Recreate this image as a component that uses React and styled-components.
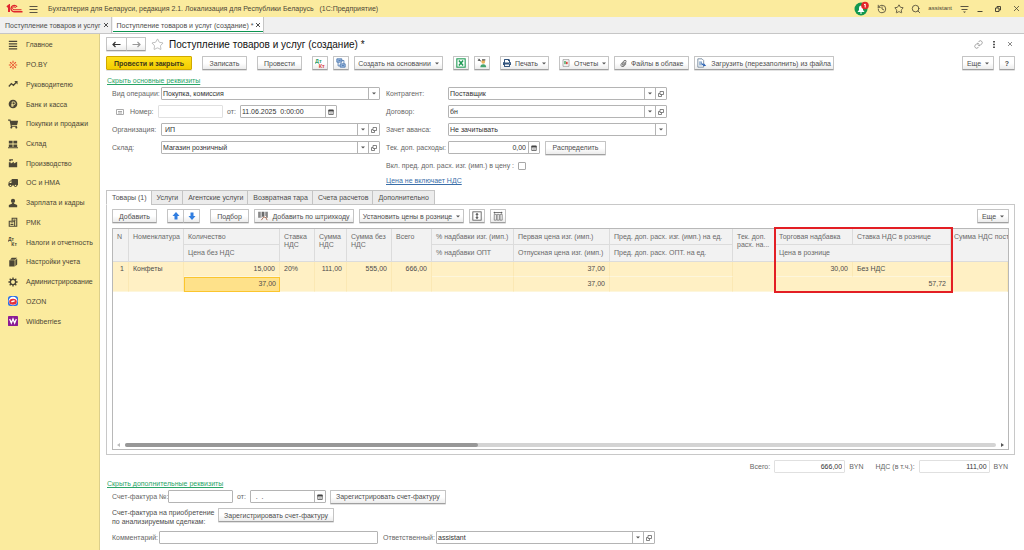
import React, { useState } from 'react';
import styled, { createGlobalStyle, css } from 'styled-components';
import { FaShoppingCart, FaTruck, FaPaperclip, FaPrint } from 'react-icons/fa';
import { History, Link, Search, Star } from 'lucide-react';

const GlobalStyle = createGlobalStyle`
  * {
    box-sizing: border-box;
  }
  body {
    margin: 0;
    background: #fff;
    color: #4d4d4d;
    font-family: 'Liberation Sans', Arial, sans-serif;
    font-size: 7px;
    line-height: 9px;
  }
  button, input, select {
    font: inherit;
    color: inherit;
    margin: 0;
  }
  svg {
    display: block;
    flex: none;
  }
`;

const Window = styled.div`
  min-height: 100vh;
  display: flex;
  flex-direction: column;
`;

/* Title bar */

const TitleBar = styled.header`
  height: 17px;
  padding: 0 3px 0 6px;
  background: #fbeb9e;
  display: flex;
  align-items: center;
  color: #4b4636;
`;

const AppName = styled.span`
  margin-left: 4px;
  flex: 1;
  white-space: pre;
`;

const TitleTools = styled.div`
  display: flex;
  align-items: center;
  gap: 7px;
`;

const WindowTools = styled.div`
  display: flex;
  align-items: center;
  gap: 8px;
  margin-left: 6px;
`;

const PlainButton = styled.button`
  border: 0;
  padding: 0;
  background: none;
  display: flex;
  align-items: center;
  justify-content: center;
  min-width: ${p => p.$width || 10}px;
  cursor: pointer;
`;

const UserName = styled.span`
  font-size: 6px;
`;

const WindowTabs = styled.nav`
  height: 17px;
  background: #f0f0f0;
  border-bottom: 1px solid #c6c6c6;
  display: flex;
`;

const WindowTab = styled.div`
  display: flex;
  align-items: center;
  gap: 2px;
  padding: 0 2px 0 5px;
  border-right: 1px solid #c6c6c6;
  white-space: nowrap;
  ${p =>
    p.$active &&
    css`
      background: #fff;
      margin-left: 1px;
      padding-left: 4px;
      box-shadow: inset 0 -1px #fff, inset 0 -2px #0c9450;
    `}
`;

/* Sections panel */

const Workspace = styled.div`
  flex: 1;
  display: flex;
`;

const Sidebar = styled.nav`
  width: 100px;
  flex: none;
  padding-top: 1px;
  background: #fbeb9e;
  border-right: 1px solid #dccf8b;
`;

const SectionList = styled.ul`
  height: 296px;
  margin: 0;
  padding: 0;
  list-style: none;
  display: grid;
  grid-auto-rows: 1fr;
`;

const Section = styled.a`
  height: 100%;
  padding-left: 8px;
  display: flex;
  align-items: center;
  gap: 8px;
  color: #4b4636;
  text-decoration: none;
  white-space: nowrap;
`;

/* Document form */

const Page = styled.main`
  flex: 1;
  min-width: 0;
  padding: 1px 9px 6px 6px;
  display: flex;
  flex-direction: column;
`;

const PageHead = styled.div`
  height: 18px;
  display: flex;
  align-items: center;
  gap: 5px;
  color: #8a8a8a;
`;

const Heading = styled.h1`
  flex: 1;
  margin: 0;
  font-size: 10px;
  font-weight: normal;
  color: #111;
`;

const PageTools = styled.div`
  display: flex;
  align-items: center;
  gap: 6px;
`;

const Bar = styled.div`
  display: flex;
  align-items: center;
  gap: 10px;
  margin-top: ${p => p.$top || 0}px;
`;

const Group = styled.div`
  display: flex;
  gap: ${p => (p.$joined ? 0 : 5)}px;
  margin-left: ${p => (p.$end ? 'auto' : 0)};
  button + button {
    margin-left: ${p => (p.$joined ? -1 : 0)}px;
  }
`;

const Button = styled.button`
  height: 14px;
  min-width: ${p => p.$width || 16}px;
  padding: 0 ${p => (p.$icon ? 0 : 2)}px;
  border: 1px solid #c4c4c4;
  border-bottom-color: #a0a0a0;
  border-radius: 1px;
  background: linear-gradient(#fff 50%, #ececec);
  box-shadow: 0 1px #e2e2e2;
  display: flex;
  align-items: center;
  justify-content: center;
  gap: 4px;
  white-space: nowrap;
  cursor: pointer;
  ${p =>
    p.$primary &&
    css`
      border-color: #d0a900;
      background: linear-gradient(#ffe11c, #f3cd00);
      color: #40391a;
      font-weight: bold;
    `}
`;

const Fold = styled.a`
  align-self: flex-start;
  margin-top: 6px;
  padding-left: 1px;
  color: #2aa568;
`;

const BlueLink = styled.a`
  height: 8px;
  line-height: 8px;
  color: #3a6ea8;
`;

const Requisites = styled.div`
  margin: 2px 0 5px;
  padding-left: 6px;
  display: grid;
  grid-template-columns: minmax(0, 268px) minmax(0, 281px);
  gap: 6px;
`;

const Column = styled.div`
  display: flex;
  flex-direction: column;
  align-items: flex-start;
  gap: 5px;
`;

const Row = styled.div`
  width: 100%;
  height: 13px;
  display: flex;
  align-items: center;
  gap: ${p => p.$gap || 0}px;
`;

const Label = styled.label`
  flex: none;
  width: ${p => (p.$width ? p.$width + 'px' : 'auto')};
  color: #666;
  white-space: nowrap;
`;

const Box = styled.div`
  height: 13px;
  width: ${p => (p.$width ? p.$width + 'px' : 'auto')};
  flex: ${p => (p.$width ? 'none' : 1)};
  min-width: 0;
  display: flex;
  border: 1px solid ${p => (p.$pale ? '#e0e0e0' : '#b4b4b4')};
  border-radius: 1px;
  background: #fff;
`;

const Input = styled.input`
  flex: 1;
  width: 100%;
  min-width: 0;
  height: 11px;
  padding: 0 ${p => (p.$right ? 2 : 1)}px;
  border: 0;
  outline: 0;
  background: none;
  color: #333;
  text-align: ${p => (p.$right ? 'right' : 'left')};
`;

const Picker = styled.div`
  flex: 1;
  min-width: 0;
  display: grid;
`;

const Select = styled.select`
  grid-area: 1 / 1;
  appearance: none;
  width: 100%;
  height: 11px;
  padding: 0 12px 0 1px;
  border: 0;
  outline: 0;
  background: none;
  color: #333;
  white-space: pre;
`;

const PickerMark = styled.span`
  grid-area: 1 / 1;
  justify-self: end;
  width: 11px;
  border-left: 1px solid #b4b4b4;
  display: flex;
  align-items: center;
  justify-content: center;
  pointer-events: none;
`;

const BoxButton = styled.button`
  width: 11px;
  height: 11px;
  padding: 0;
  border: 0;
  border-left: 1px solid #b4b4b4;
  background: none;
  display: flex;
  align-items: center;
  justify-content: center;
`;

const Check = styled.input`
  appearance: none;
  width: 8px;
  height: 8px;
  border: 1px solid #a8a8a8;
  border-radius: 1px;
  background: #fff;
`;

/* Tabular part */

const Tabs = styled.div`
  height: 15px;
  margin-bottom: -1px;
  display: flex;
`;

const Tab = styled.button`
  position: relative;
  padding: 0 5px;
  border: 1px solid #c4c4c4;
  border-bottom-color: ${p => (p.$active ? '#fff' : '#c4c4c4')};
  background: ${p => (p.$active ? '#fff' : '#ececec')};
  white-space: nowrap;
  & + & {
    margin-left: -2px;
  }
`;

const Panel = styled.section`
  flex: 1;
  padding: 4px 5px;
  border: 1px solid #c8c8c8;
  display: flex;
  flex-direction: column;
`;

const TableFrame = styled.div`
  position: relative;
  flex: 1;
  margin-top: 5px;
  border: 1px solid #b8b8b8;
  display: flex;
  flex-direction: column;
  justify-content: space-between;
`;

const TableScroll = styled.div`
  overflow: hidden;
`;

const Table = styled.table`
  width: 100%;
  table-layout: fixed;
  border-collapse: separate;
  border-spacing: 0;
  line-height: 8px;
`;

const HeadCell = styled.th`
  height: ${p => (p.$low ? 17 : 16)}px;
  padding: 4px 0 0 4px;
  border-right: 1px solid #dcdcdc;
  border-bottom: 1px solid #dcdcdc;
  background: #f2f2f2;
  color: #6a6a6a;
  font-weight: normal;
  text-align: left;
  vertical-align: top;
  white-space: ${p => (p.$wrap ? 'pre-line' : 'nowrap')};
  &[rowspan]:last-child {
    padding-left: 3px;
    border-right: 0;
  }
`;

const Cell = styled.td`
  height: 15px;
  padding: 3px 4px 0;
  border-right: 1px solid #fbe8b4;
  border-bottom: 1px solid #fdf6dc;
  background: #fff0c4;
  vertical-align: top;
  text-align: ${p => (p.$right ? 'right' : 'left')};
  ${p =>
    p.$current &&
    css`
      padding-top: 2px;
      padding-right: 3px;
      border: 1px solid #fbc52d;
      background: #fee18a;
    `}
`;

const Frame = styled.div`
  position: absolute;
  top: -2px;
  left: 661px;
  width: 179px;
  height: 66px;
  border: 2px solid #e31e24;
  pointer-events: none;
`;

const ScrollRow = styled.div`
  height: 8px;
  padding: 0 3px;
  display: flex;
  align-items: center;
  gap: 4px;
`;

const Track = styled.div`
  flex: 1;
  height: 4px;
  border-radius: 2px;
  background: #d4d4d4;
`;

const Thumb = styled.div`
  height: 4px;
  border-radius: 2px;
  background: #979797;
`;

/* Footer of the document */

const Totals = styled.div`
  height: 13px;
  margin-top: 5px;
  padding-right: 7px;
  display: flex;
  align-items: center;
  justify-content: flex-end;
  gap: 4px;
  color: #666;
  span + label {
    margin-left: 8px;
  }
`;

const Extra = styled.div`
  margin-top: 2px;
  padding-left: 6px;
  display: flex;
  flex-direction: column;
  gap: 5px;
`;

const ExtraRow = styled.div`
  display: flex;
  align-items: flex-start;
  gap: 5px;
`;

const TwoLines = styled.span`
  width: 101px;
  white-space: pre;
`;

/* Icons */

const Icon = ({ size = 10, children, box = 12 }) => (
  <svg width={size} height={size} viewBox={`0 0 ${box} ${box}`} fill="currentColor" aria-hidden="true">
    {children}
  </svg>
);

const Logo = () => (
  <svg width="17" height="9" viewBox="0 0 34 18" fill="none" stroke="#e0262d" strokeWidth="2.8" aria-label="1C">
    <path d="M2 6 L6 3 V16" strokeWidth="4" />
    <path d="M22 6 A6.4 6.4 0 1 0 16 15.500 H33" />
    <path d="M19 8 A3 3 0 1 0 16 11.500 H31" strokeWidth="2" />
  </svg>
);

const Caret = () => (
  <svg width="4" height="3" viewBox="0 0 4 3" fill="#555" aria-hidden="true">
    <path d="M0 0.500 H4 L2 2.500 Z" />
  </svg>
);

const Cross = ({ size = 6 }) => (
  <svg width={size} height={size} viewBox="0 0 6 6" stroke="currentColor" fill="none" aria-hidden="true">
    <path d="M1 1 L5 5 M5 1 L1 5" />
  </svg>
);

const Arrow = ({ back }) => (
  <svg width="9" height="7" viewBox="0 0 9 7" fill="none" stroke={back ? '#333' : '#999'} strokeWidth="1.2" aria-hidden="true">
    <path d={back ? 'M8.500 3.500 H1 M3.500 1 L1 3.500 L3.500 6' : 'M0.500 3.500 H8 M5.500 1 L8 3.500 L5.500 6'} />
  </svg>
);

const OpenIcon = () => (
  <svg width="6" height="6" viewBox="0 0 12 12" fill="none" stroke="#666" strokeWidth="1.6" aria-hidden="true">
    <path d="M4 1 H11 V7 H4 Z M4 5 H1 V11 H7 V7" />
  </svg>
);

const CalendarIcon = () => (
  <svg width="6" height="6" viewBox="0 0 12 12" aria-hidden="true">
    <path d="M1.500 2 H10.500 V11 H1.500 Z" fill="#fff" stroke="#555" strokeWidth="1.600" />
    <path d="M1 1.500 H11 V5 H1 Z" fill="#444" />
    <path d="M3.500 7 H9 M3.500 9 H9" stroke="#888" />
  </svg>
);

const UpDown = ({ down }) => (
  <svg width="8" height="8" viewBox="0 0 8 8" fill="#2f7de0" aria-hidden="true">
    <path d={down ? 'M4 8 L0.500 4 H2.500 V0.500 H5.500 V4 H7.500 Z' : 'M4 0 L0.500 4 H2.500 V7.500 H5.500 V4 H7.500 Z'} />
  </svg>
);

const DtKt = ({ mono }) => (
  <Icon size={mono ? 10 : 11}>
    <g fontSize="6" fontWeight="bold" fontFamily="Liberation Sans">
      <text x="0" y="5" fill={mono ? '#4b4636' : '#2f9d62'}>Дт</text>
      <text x="4" y="11" fill={mono ? '#4b4636' : '#d9433c'}>Кт</text>
    </g>
  </Icon>
);

const sections = [
  ['Главное', <Icon><path d="M1 1 H11 V2.500 H1 Z M1 4 H11 V5.500 H1 Z M1 7 H11 V8.500 H1 Z M1 10 H11 V11.500 H1 Z" /></Icon>],
  ['PO.BY', (
    <Icon>
      <path d="M6 1 V4 M6 8 V11 M1 6 H3.500 M8.500 6 H11 M2.500 2.500 L4.500 4.500 M9.500 2.500 L7.500 4.500 M2.500 9.500 L4.500 7.500 M9.500 9.500 L7.500 7.500" stroke="#e8502e" strokeWidth="1.300" />
      <circle cx="6" cy="6" r="1.300" fill="#e8502e" />
    </Icon>
  )],
  ['Руководителю', <Icon><path d="M1 9 L4 5.500 L6.500 7.500 L10 4" fill="none" stroke="currentColor" strokeWidth="1.600" /><path d="M7.500 2.500 H11.500 V6.500 Z" /></Icon>],
  ['Банк и касса', (
    <Icon>
      <circle cx="6" cy="6" r="5.200" />
      <path d="M5 9.500 V3.500 H7 A1.600 1.600 0 0 1 7 6.800 H4 M4 8.200 H7" fill="none" stroke="#fbeb9e" />
    </Icon>
  )],
  ['Покупки и продажи', <FaShoppingCart size={10} />],
  ['Склад', <Icon><path d="M1 2 H5.500 V5.500 H1 Z M6.500 2 H11 V5.500 H6.500 Z M1 6.500 H5.500 V9.500 H1 Z M6.500 6.500 H11 V9.500 H6.500 Z M0 10 H12 V11 H0 Z" /></Icon>],
  ['Производство', <Icon><path d="M1 11 V5 H3 L3.500 6.500 L7 4.500 V6.500 L11 4.500 V11 Z M1.500 1.500 H6 V3 H3.500 V4 H1.500 Z" /></Icon>],
  ['ОС и НМА', <FaTruck size={10} transform="scale(-1 1)" />],
  ['Зарплата и кадры', <Icon><circle cx="6" cy="3.500" r="2.500" /><path d="M1 11 V8.500 L4.500 7 L5 6 H7 L7.500 7 L11 8.500 V11 Z" /></Icon>],
  ['РМК', (
    <Icon>
      <path d="M1.500 5 H8 V11 H1.500 Z M5 5 V1.500 H10.500 V11 H8" fill="none" stroke="currentColor" strokeWidth="1.300" />
      <path d="M3 6.500 H6.500 V7.500 H3 Z M3 8.500 H6.500 V9.500 H3 Z M6.500 3 H9 V4.500 H6.500 Z" />
    </Icon>
  )],
  ['Налоги и отчетность', <DtKt mono />],
  ['Настройки учета', <Icon><path d="M1.500 4 H8 V11.500 H1.500 Z M2.500 3.200 L4.500 1 H11 L8.500 3.200 Z M8.800 4 L11 2 V9 L8.800 11 Z" /></Icon>],
  ['Администрирование', (
    <Icon>
      <circle cx="6" cy="6" r="3.200" fill="none" stroke="currentColor" strokeWidth="1.600" />
      <path d="M6 0.500 V3 M6 9 V11.500 M0.500 6 H3 M9 6 H11.500 M2 2 L4 4 M10 2 L8 4 M2 10 L4 8 M10 10 L8 8" stroke="currentColor" strokeWidth="1.600" />
    </Icon>
  )],
  ['OZON', (
    <Icon>
      <rect width="12" height="12" rx="3" fill="#2a6fe8" />
      <circle cx="6" cy="6" r="5.200" fill="#fff" />
      <ellipse cx="6" cy="6.800" rx="4.600" ry="3.600" fill="#e5303b" />
      <ellipse cx="6" cy="6.300" rx="2.400" ry="1" fill="#fff" transform="rotate(-12 6 6)" />
    </Icon>
  )],
  ['Wildberries', (
    <Icon>
      <rect width="12" height="12" rx="1" fill="#8b1b95" />
      <path d="M2 3.500 L4 8.500 L6 3.500 L8 8.500 L10 3.500" fill="none" stroke="#fff" strokeWidth="1.500" />
    </Icon>
  )],
];

const tabNames = ['Товары (1)', 'Услуги', 'Агентские услуги', 'Возвратная тара', 'Счета расчетов', 'Дополнительно'];

const columns = [16, 55, 96, 35, 32, 45, 40, 82, 96, 123, 42, 78, 98];

const Combo = ({ id, value, open, width }) => (
  <Box $width={width}>
    <Picker>
      <Select id={id} defaultValue={value}>
        <option value={value}>{value}</option>
      </Select>
      <PickerMark>
        <Caret />
      </PickerMark>
    </Picker>
    {open && (
      <BoxButton aria-label="Открыть">
        <OpenIcon />
      </BoxButton>
    )}
  </Box>
);

const DateBox = ({ id, value, width }) => (
  <Box $width={width}>
    <Input id={id} defaultValue={value} />
    <BoxButton aria-label="Выбрать дату">
      <CalendarIcon />
    </BoxButton>
  </Box>
);

const Header = () => (
  <TitleBar>
    <Logo />
    <PlainButton $width={21} aria-label="Меню">
      <svg width="9" height="8" viewBox="0 0 9 8" stroke="#5b5543" aria-hidden="true">
        <path d="M0.500 1.500 H8.500 M0.500 4.500 H8.500 M0.500 7.500 H8.500" />
      </svg>
    </PlainButton>
    <AppName>
      Бухгалтерия для Беларуси, редакция 2.1. Локализация для Республики Беларусь{'   '}(1С:Предприятие)
    </AppName>
    <TitleTools>
      <PlainButton aria-label="Уведомления">
        <svg width="16" height="16" viewBox="0 0 16 16" aria-hidden="true">
          <circle cx="7" cy="8" r="6.500" fill="#12984f" />
          <path d="M3.500 11 L5 9 V7 A2 2.500 0 0 1 9 7 V9 L10.500 11 Z M6 11.500 H8 V12.500 H6 Z" fill="#fff" />
          <circle cx="11" cy="4.500" r="3.800" fill="#e3262b" />
          <path d="M10 3.800 L11.200 3 V6.500" stroke="#fff" fill="none" />
        </svg>
      </PlainButton>
      <PlainButton aria-label="История">
        <History size={10} strokeWidth={2} />
      </PlainButton>
      <PlainButton aria-label="Избранное">
        <Star size={10} strokeWidth={2} />
      </PlainButton>
      <PlainButton aria-label="Поиск">
        <Search size={10} strokeWidth={2} />
      </PlainButton>
      <UserName>assistant</UserName>
      <PlainButton aria-label="Настройки">
        <svg width="9" height="8" viewBox="0 0 9 8" stroke="#5b5543" aria-hidden="true">
          <path d="M0.500 1.500 H8.500 M1.500 4.500 H7.500" />
          <path d="M3 6.500 H6 L4.500 8 Z" fill="#5b5543" stroke="none" />
        </svg>
      </PlainButton>
    </TitleTools>
    <WindowTools>
      <PlainButton aria-label="Свернуть">
        <svg width="6" height="6" viewBox="0 0 6 6" stroke="#4b4636" aria-hidden="true">
          <path d="M0.500 5.500 H5.500" />
        </svg>
      </PlainButton>
      <PlainButton aria-label="Восстановить">
        <svg width="6" height="6" viewBox="0 0 6 6" fill="none" stroke="#4b4636" aria-hidden="true">
          <path d="M0.500 2 H4 V5.500 H0.500 Z M2 2 V0.500 H5.500 V4 H4" />
        </svg>
      </PlainButton>
      <PlainButton aria-label="Закрыть">
        <svg width="7" height="7" viewBox="0 0 7 7" stroke="#4b4636" aria-hidden="true">
          <path d="M1 1 L6 6 M6 1 L1 6" strokeWidth="0.800" />
        </svg>
      </PlainButton>
    </WindowTools>
  </TitleBar>
);

const Commands = () => (
  <Bar $top={3}>
    <Button $primary $width={86}>Провести и закрыть</Button>
    <Button $width={45}>Записать</Button>
    <Button $width={45}>Провести</Button>
    <Group>
      <Button $icon aria-label="Дт Кт">
        <DtKt />
      </Button>
      <Button $icon aria-label="Структура подчиненности">
        <Icon>
          <path d="M1 1 H7 V5 H1 Z M5 7 H11 V11 H5 Z" fill="#9dbbe0" stroke="#4a76ad" />
          <path d="M2.500 5 V9.500 H5 M7 3 H9.500 V7 M3 3 H5.500 M7 9 H9.500" fill="none" stroke="#4a76ad" />
        </Icon>
      </Button>
      <Button $width={89}>
        Создать на основании <Caret />
      </Button>
    </Group>
    <Group>
      <Button $icon aria-label="Excel">
        <Icon>
          <rect x="1" y="1" width="10" height="10" fill="#fff" stroke="#1f9a55" strokeWidth="1.300" />
          <path d="M3.500 3 L8.500 9 M8.500 3 L3.500 9" stroke="#1f9a55" strokeWidth="1.800" />
        </Icon>
      </Button>
      <Button $icon aria-label="Контрагент">
        <Icon>
          <path d="M1 1 L5 4 M1 3 H4 M3 1 V3" stroke="#555" />
          <circle cx="7.500" cy="4.500" r="2.300" fill="#e9b25c" />
          <path d="M4 11 Q4 7.500 7.500 7.500 Q11 7.500 11 11 Z" fill="#45a36d" />
          <path d="M6 1.500 H10 V3 H6 Z" fill="#555" />
        </Icon>
      </Button>
    </Group>
    <Button $width={49}>
      <FaPrint size={8} color="#33557d" /> Печать <Caret />
    </Button>
    <Group>
      <Button $width={50}>
        <Icon size={8}>
          <path d="M1.500 1 H10.500 V11 H1.500 Z" fill="#fff" stroke="#888" />
          <path d="M3.500 3 H5.500 V8 H3.500 Z" fill="#3a9b55" />
          <path d="M6 4 H8.500 V8 H6 Z" fill="#d9433c" />
        </Icon>
        Отчеты <Caret />
      </Button>
      <Button $width={75}>
        <FaPaperclip size={7} color="#777" /> Файлы в облаке
      </Button>
      <Button $width={139}>
        <Icon>
          <path d="M1 1 H6 L8 3 V11 H1 Z" fill="#fff" stroke="#6b7f96" />
          <path d="M2.500 4 H6 V9 H2.500 Z" fill="#9db8d6" />
          <path d="M5 5 L8 8 V6 L11 9.500 H8 L6 8 Z" fill="#2a63b8" />
        </Icon>
        Загрузить (перезаполнить) из файла
      </Button>
    </Group>
    <Group $end>
      <Button $width={32}>
        Еще <Caret />
      </Button>
      <Button $icon aria-label="Справка">
        <b>?</b>
      </Button>
    </Group>
  </Bar>
);

const Details = () => (
  <Requisites>
    <Column>
      <Row>
        <Label $width={49} htmlFor="operation">Вид операции:</Label>
        <Combo id="operation" value="Покупка, комиссия" />
      </Row>
      <Row $gap={4}>
        <Label $width={42} htmlFor="number">
          <Row $gap={6}>
            <svg width="12" height="6" viewBox="0 0 12 6" aria-hidden="true">
              <path d="M4.500 0.500 H11.500 V5.500 H4.500 Z M6 2.500 H10 M6 4 H10" fill="none" stroke="#aaa" />
            </svg>
            Номер:
          </Row>
        </Label>
        <Box $width={65} $pale>
          <Input id="number" />
        </Box>
        <Label htmlFor="date">от:</Label>
        <DateBox id="date" value="11.06.2025  0:00:00" width={97} />
      </Row>
      <Row>
        <Label $width={49} htmlFor="company">Организация:</Label>
        <Combo id="company" value={'\u00a0ИП'} open />
      </Row>
      <Row>
        <Label $width={49} htmlFor="store">Склад:</Label>
        <Combo id="store" value="Магазин розничный" open />
      </Row>
    </Column>
    <Column>
      <Row>
        <Label $width={62} htmlFor="partner">Контрагент:</Label>
        <Combo id="partner" value="Поставщик" open />
      </Row>
      <Row>
        <Label $width={62} htmlFor="contract">Договор:</Label>
        <Combo id="contract" value="бн" open />
      </Row>
      <Row>
        <Label $width={62} htmlFor="advance">Зачет аванса:</Label>
        <Combo id="advance" value="Не зачитывать" />
      </Row>
      <Row>
        <Label $width={62} htmlFor="costs">Тек. доп. расходы:</Label>
        <Row $gap={5}>
          <Box $width={92}>
            <Input id="costs" $right defaultValue="0,00" />
            <BoxButton aria-label="Калькулятор">
              <CalendarIcon />
            </BoxButton>
          </Box>
          <Button $width={61}>Распределить</Button>
        </Row>
      </Row>
      <Row $gap={4}>
        <Label htmlFor="include">Вкл. пред. доп. расх. изг. (имп.) в цену :</Label>
        <Check type="checkbox" id="include" />
      </Row>
      <BlueLink href="#vat">Цена не включает НДС</BlueLink>
    </Column>
  </Requisites>
);

const Goods = () => (
  <TableFrame>
    <TableScroll>
      <Table>
        <colgroup>
          {columns.map((width, i) => (
            <col key={i} width={width} />
          ))}
          <col />
        </colgroup>
        <thead>
          <tr>
            <HeadCell rowSpan={2}>N</HeadCell>
            <HeadCell rowSpan={2}>Номенклатура</HeadCell>
            <HeadCell>Количество</HeadCell>
            <HeadCell rowSpan={2} $wrap>{'Ставка\nНДС'}</HeadCell>
            <HeadCell rowSpan={2} $wrap>{'Сумма\nНДС'}</HeadCell>
            <HeadCell rowSpan={2} $wrap>{'Сумма без\nНДС'}</HeadCell>
            <HeadCell rowSpan={2}>Всего</HeadCell>
            <HeadCell>% надбавки изг. (имп.)</HeadCell>
            <HeadCell>Первая цена изг. (имп.)</HeadCell>
            <HeadCell>Пред. доп. расх. изг. (имп.) на ед.</HeadCell>
            <HeadCell rowSpan={2} $wrap>{'Тек. доп.\nрасх. на...'}</HeadCell>
            <HeadCell>Торговая надбавка</HeadCell>
            <HeadCell>Ставка НДС в рознице</HeadCell>
            <HeadCell rowSpan={2}>Сумма НДС пост</HeadCell>
          </tr>
          <tr>
            <HeadCell $low>Цена без НДС</HeadCell>
            <HeadCell $low>% надбавки ОПТ</HeadCell>
            <HeadCell $low>Отпускная цена изг. (имп.)</HeadCell>
            <HeadCell $low>Пред. доп. расх. ОПТ. на ед.</HeadCell>
            <HeadCell $low colSpan={2}>Цена в рознице</HeadCell>
          </tr>
        </thead>
        <tbody>
          <tr>
            <Cell rowSpan={2} $right>1</Cell>
            <Cell rowSpan={2}>Конфеты</Cell>
            <Cell $right>15,000</Cell>
            <Cell rowSpan={2}>20%</Cell>
            <Cell rowSpan={2} $right>111,00</Cell>
            <Cell rowSpan={2} $right>555,00</Cell>
            <Cell rowSpan={2} $right>666,00</Cell>
            <Cell />
            <Cell $right>37,00</Cell>
            <Cell />
            <Cell rowSpan={2} />
            <Cell $right>30,00</Cell>
            <Cell>Без НДС</Cell>
            <Cell rowSpan={2} />
          </tr>
          <tr>
            <Cell $right $current>37,00</Cell>
            <Cell />
            <Cell $right>37,00</Cell>
            <Cell />
            <Cell $right colSpan={2}>57,72</Cell>
          </tr>
        </tbody>
      </Table>
    </TableScroll>
    <ScrollRow>
      <svg width="5" height="4" viewBox="0 0 5 4" fill="#bbb" aria-hidden="true">
        <path d="M4 0 V4 L1 2 Z" />
      </svg>
      <Track>
        <Thumb style={{ width: `${(353 / 870) * 100}%` }} />
      </Track>
      <svg width="5" height="4" viewBox="0 0 5 4" fill="#555" aria-hidden="true">
        <path d="M1 0 V4 L4 2 Z" />
      </svg>
    </ScrollRow>
    <Frame />
  </TableFrame>
);

const GoodsBar = () => (
  <Bar>
    <Button $width={45}>Добавить</Button>
    <Group $joined>
      <Button $icon $width={17} aria-label="Вверх">
        <UpDown />
      </Button>
      <Button $icon $width={17} aria-label="Вниз">
        <UpDown down />
      </Button>
    </Group>
    <Group>
      <Button $width={39}>Подбор</Button>
      <Button $width={100}>
        <Icon>
          <path d="M0.500 1 H2 V8 H0.500 Z M3 1 H4 V8 H3 Z M5 1 H7 V7 H5 Z M8 1 H9 V6 H8 Z M10 1 H11.500 V8 H10 Z" />
          <path d="M4 11 L7 7 L9.500 8 L11 11" fill="none" stroke="#a05a3c" />
        </Icon>
        Добавить по штрихкоду
      </Button>
      <Button $width={105}>
        Установить цены в рознице <Caret />
      </Button>
      <Button $icon aria-label="Высота строк">
        <Icon>
          <rect x="1" y="1" width="10" height="10" fill="#fff" stroke="#555" />
          <path d="M6 2 L8 4.500 H6.600 V7.500 H8 L6 10 L4 7.500 H5.400 V4.500 H4 Z" />
        </Icon>
      </Button>
      <Button $icon aria-label="Настройка колонок">
        <Icon>
          <path d="M1.500 4 H4 V11 H1.500 Z M5 4 H7.500 V11 H5 Z M8.500 4 H11 V11 H8.500 Z" fill="#fff" stroke="#777" />
          <path d="M2 0.500 V3.500 L0.500 2 Z M10 0.500 V3.500 L11.500 2 Z M2 1.500 H10 V2.500 H2 Z" />
        </Icon>
      </Button>
    </Group>
    <Group $end>
      <Button $width={32}>
        Еще <Caret />
      </Button>
    </Group>
  </Bar>
);

export default function App() {
  const [tab, setTab] = useState(0);

  return (
    <Window>
      <GlobalStyle />
      <Header />
      <WindowTabs>
        <WindowTab>
          Поступление товаров и услуг
          <PlainButton $width={6} aria-label="Закрыть вкладку">
            <Cross />
          </PlainButton>
        </WindowTab>
        <WindowTab $active>
          Поступление товаров и услуг (создание) *
          <PlainButton $width={6} aria-label="Закрыть вкладку">
            <Cross />
          </PlainButton>
        </WindowTab>
      </WindowTabs>
      <Workspace>
        <Sidebar>
          <SectionList>
            {sections.map(([name, icon]) => (
              <li key={name}>
                <Section href="#section">
                  {icon} {name}
                </Section>
              </li>
            ))}
          </SectionList>
        </Sidebar>
        <Page>
          <PageHead>
            <Group $joined>
              <Button $icon $width={21} aria-label="Назад">
                <Arrow back />
              </Button>
              <Button $icon $width={20} aria-label="Вперед">
                <Arrow />
              </Button>
            </Group>
            <Star size={13} strokeWidth={1} />
            <Heading>Поступление товаров и услуг (создание) *</Heading>
            <PageTools>
              <PlainButton aria-label="Ссылка">
                <Link size={9} />
              </PlainButton>
              <PlainButton aria-label="Действия">
                <svg width="2" height="7" viewBox="0 0 2 7" fill="#555" aria-hidden="true">
                  <path d="M0 0 H2 V1.500 H0 Z M0 2.750 H2 V4.250 H0 Z M0 5.500 H2 V7 H0 Z" />
                </svg>
              </PlainButton>
              <PlainButton aria-label="Закрыть">
                <Cross />
              </PlainButton>
            </PageTools>
          </PageHead>
          <Commands />
          <Fold href="#main">Скрыть основные реквизиты</Fold>
          <Details />
          <Tabs role="tablist">
            {tabNames.map((name, i) => (
              <Tab key={name} role="tab" aria-selected={i === tab} $active={i === tab} onClick={() => setTab(i)}>
                {name}
              </Tab>
            ))}
          </Tabs>
          <Panel>
            <GoodsBar />
            <Goods />
          </Panel>
          <Totals>
            <Label htmlFor="total">Всего:</Label>
            <Box $width={71} $pale>
              <Input id="total" $right readOnly value="666,00" />
            </Box>
            <span>BYN</span>
            <Label htmlFor="vat">НДС (в т.ч.):</Label>
            <Box $width={71} $pale>
              <Input id="vat" $right readOnly value="111,00" />
            </Box>
            <span>BYN</span>
          </Totals>
          <Fold href="#extra">Скрыть дополнительные реквизиты</Fold>
          <Extra>
            <Row $gap={4}>
              <Label $width={52} htmlFor="invoice">Счет-фактура №:</Label>
              <Box $width={65}>
                <Input id="invoice" />
              </Box>
              <Label htmlFor="invoiceDate">от:</Label>
              <DateBox id="invoiceDate" value="  .  ." width={76} />
              <Button $width={116}>Зарегистрировать счет-фактуру</Button>
            </Row>
            <ExtraRow>
              <TwoLines>{'Счет-фактура на приобретение\nпо анализируемым сделкам:'}</TwoLines>
              <Button $width={116}>Зарегистрировать счет-фактуру</Button>
            </ExtraRow>
            <Row $gap={5}>
              <Label $width={42} htmlFor="comment">Комментарий:</Label>
              <Box $width={219}>
                <Input id="comment" />
              </Box>
              <Label $width={48} htmlFor="responsible">Ответственный:</Label>
              <Combo id="responsible" value="assistant" open width={219} />
            </Row>
          </Extra>
        </Page>
      </Workspace>
    </Window>
  );
}
